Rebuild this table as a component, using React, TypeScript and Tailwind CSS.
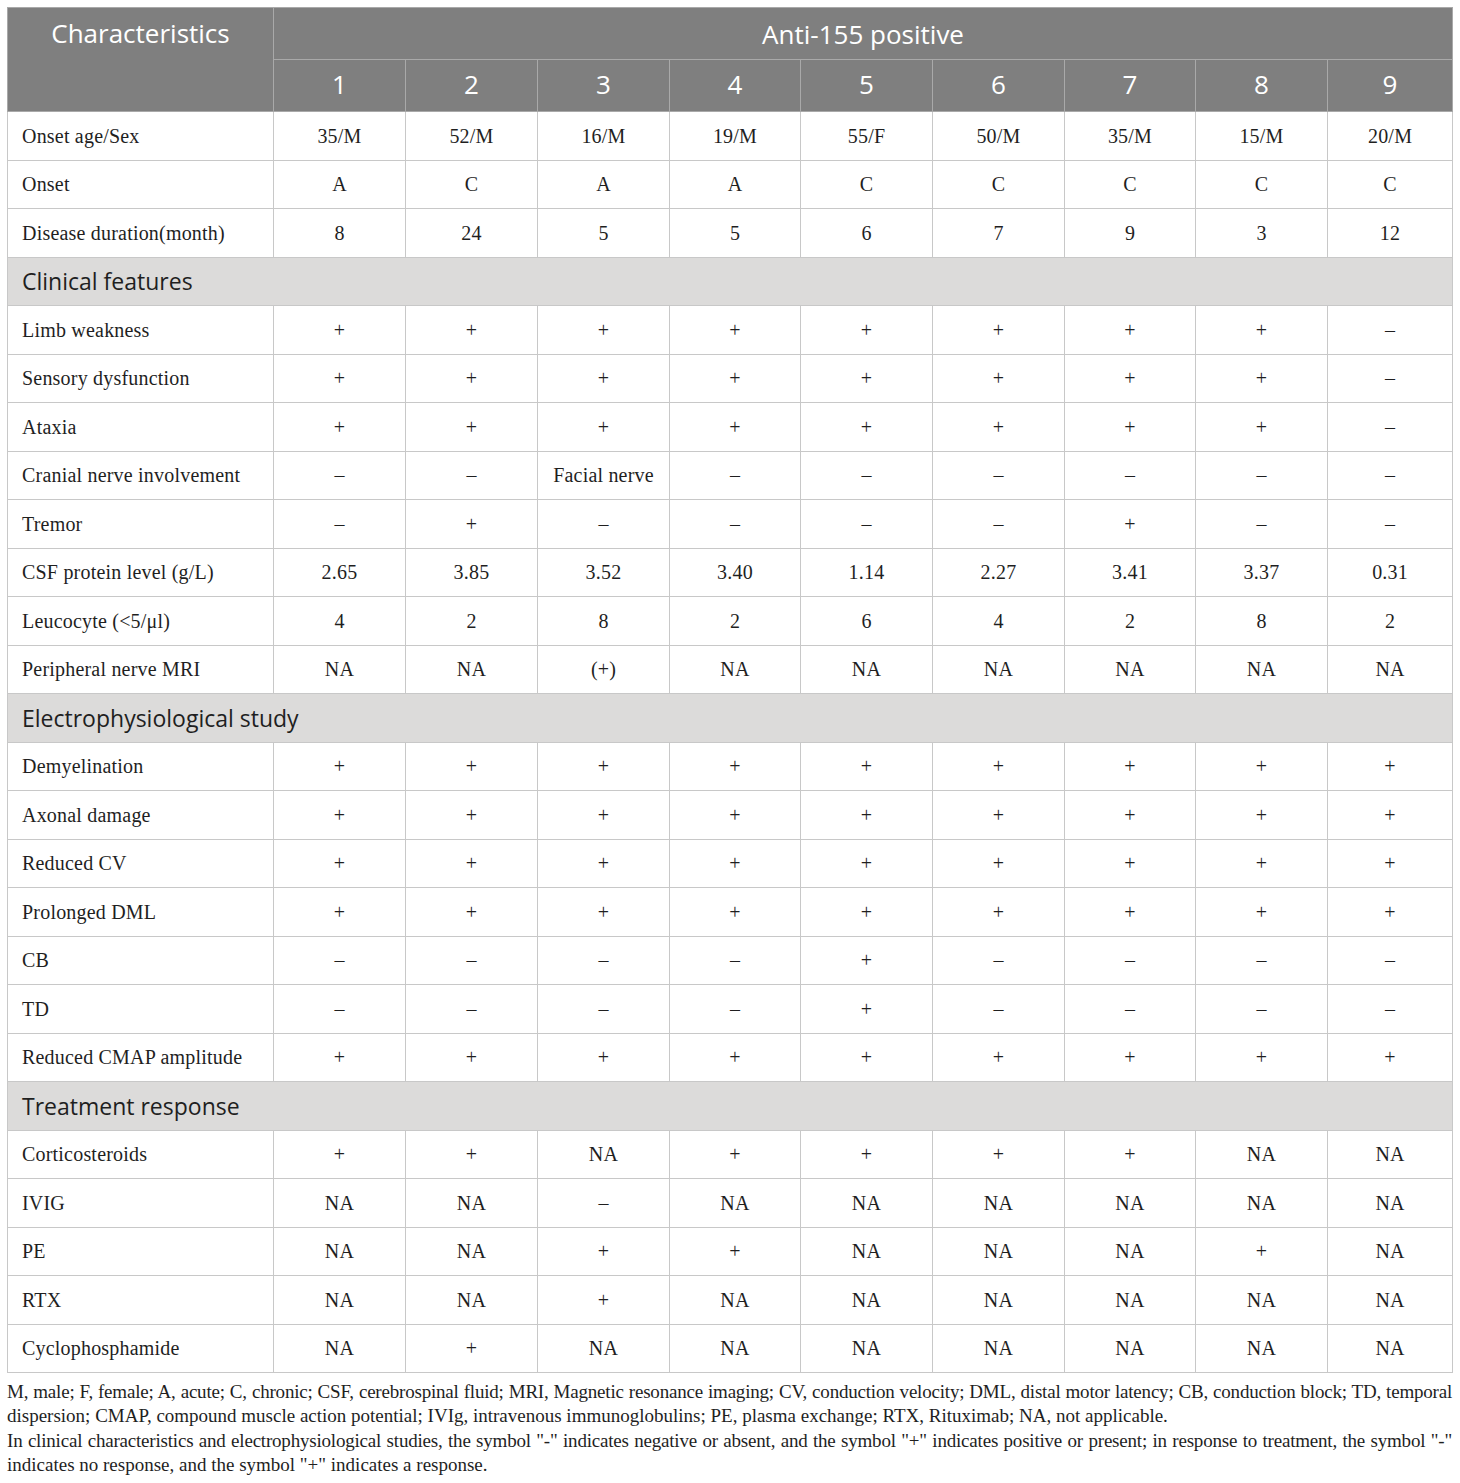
import type { ReactNode } from "react";

type Row = { label: string; values: string[] } | { section: string };

const P = "+";
const M = "–";

const rows: Row[] = [
  { label: "Onset age/Sex", values: ["35/M", "52/M", "16/M", "19/M", "55/F", "50/M", "35/M", "15/M", "20/M"] },
  { label: "Onset", values: ["A", "C", "A", "A", "C", "C", "C", "C", "C"] },
  { label: "Disease duration(month)", values: ["8", "24", "5", "5", "6", "7", "9", "3", "12"] },
  { section: "Clinical features" },
  { label: "Limb weakness", values: [P, P, P, P, P, P, P, P, M] },
  { label: "Sensory dysfunction", values: [P, P, P, P, P, P, P, P, M] },
  { label: "Ataxia", values: [P, P, P, P, P, P, P, P, M] },
  { label: "Cranial nerve involvement", values: [M, M, "Facial nerve", M, M, M, M, M, M] },
  { label: "Tremor", values: [M, P, M, M, M, M, P, M, M] },
  { label: "CSF protein level (g/L)", values: ["2.65", "3.85", "3.52", "3.40", "1.14", "2.27", "3.41", "3.37", "0.31"] },
  { label: "Leucocyte (<5/μl)", values: ["4", "2", "8", "2", "6", "4", "2", "8", "2"] },
  { label: "Peripheral nerve MRI", values: ["NA", "NA", "(+)", "NA", "NA", "NA", "NA", "NA", "NA"] },
  { section: "Electrophysiological study" },
  { label: "Demyelination", values: [P, P, P, P, P, P, P, P, P] },
  { label: "Axonal damage", values: [P, P, P, P, P, P, P, P, P] },
  { label: "Reduced CV", values: [P, P, P, P, P, P, P, P, P] },
  { label: "Prolonged DML", values: [P, P, P, P, P, P, P, P, P] },
  { label: "CB", values: [M, M, M, M, P, M, M, M, M] },
  { label: "TD", values: [M, M, M, M, P, M, M, M, M] },
  { label: "Reduced CMAP amplitude", values: [P, P, P, P, P, P, P, P, P] },
  { section: "Treatment response" },
  { label: "Corticosteroids", values: [P, P, "NA", P, P, P, P, "NA", "NA"] },
  { label: "IVIG", values: ["NA", "NA", M, "NA", "NA", "NA", "NA", "NA", "NA"] },
  { label: "PE", values: ["NA", "NA", P, P, "NA", "NA", "NA", P, "NA"] },
  { label: "RTX", values: ["NA", "NA", P, "NA", "NA", "NA", "NA", "NA", "NA"] },
  { label: "Cyclophosphamide", values: ["NA", P, "NA", "NA", "NA", "NA", "NA", "NA", "NA"] },
];

const colWidths = [266, 132, 132, 132, 131, 132, 132, 131, 132, 125];

const sans = "font-['Open_Sans',_'Noto_Sans',_sans-serif]";
const serif = "font-['Liberation_Serif',_'DejaVu_Serif',_serif]";

function HeadCell({ children, className = "", ...rest }: { children?: ReactNode; className?: string; colSpan?: number; rowSpan?: number }) {
  return (
    <th {...rest} className={`border border-[#a9a9a9] bg-[#7f7f7f] font-normal text-white ${className}`}>
      {children}
    </th>
  );
}

export default function App() {
  return (
    <div className="min-h-[1483px] w-[1460px] bg-white px-[7px] pt-[7px] text-[#1f1f1f]">
      <table className="w-[1445px] table-fixed border-collapse">
        <colgroup>
          {colWidths.map((w, i) => (
            <col key={i} style={{ width: w }} />
          ))}
        </colgroup>
        <thead className={`${sans} text-[26px] leading-[32px]`}>
          <tr className="h-[52px]">
            <HeadCell rowSpan={2} className="align-top pt-[9px]">Characteristics</HeadCell>
            <HeadCell colSpan={9}>Anti-155 positive</HeadCell>
          </tr>
          <tr className="h-[52px]">
            {[1, 2, 3, 4, 5, 6, 7, 8, 9].map((n) => (
              <HeadCell key={n} className="pb-[3px]">{n}</HeadCell>
            ))}
          </tr>
        </thead>
        <tbody className={`${serif} text-[20px] tracking-[0.2px]`}>
          {rows.map((r, i) =>
            "section" in r ? (
              <tr key={i} className="h-[48.5px]">
                <td colSpan={10} className={`border border-[#c8c8c8] bg-[#dcdbda] pl-[14px] ${sans} text-[23px] tracking-normal`}>
                  {r.section}
                </td>
              </tr>
            ) : (
              <tr key={i} className="h-[48.5px]">
                <td className="border border-[#c8c8c8] pl-[14px]">{r.label}</td>
                {r.values.map((v, j) => (
                  <td key={j} className="border border-[#c8c8c8] text-center">
                    {v}
                  </td>
                ))}
              </tr>
            )
          )}
        </tbody>
      </table>

      {/* footnotes: first line of each paragraph is stretched to the table width */}
      <div className={`${serif} mt-[7px] w-[1445px] text-[19px] leading-[24.4px]`}>
        <p className="whitespace-nowrap text-justify tracking-[-0.2px] [text-align-last:justify]">
          M, male; F, female; A, acute; C, chronic; CSF, cerebrospinal fluid; MRI, Magnetic resonance imaging; CV, conduction velocity; DML, distal motor latency; CB, conduction block; TD, temporal
        </p>
        <p className="whitespace-nowrap">
          dispersion; CMAP, compound muscle action potential; IVIg, intravenous immunoglobulins; PE, plasma exchange; RTX, Rituximab; NA, not applicable.
        </p>
        <p className="whitespace-nowrap text-justify tracking-[-0.2px] [text-align-last:justify]">
          In clinical characteristics and electrophysiological studies, the symbol "-" indicates negative or absent, and the symbol "+" indicates positive or present; in response to treatment, the symbol "-"
        </p>
        <p className="whitespace-nowrap">indicates no response, and the symbol "+" indicates a response.</p>
      </div>
    </div>
  );
}
